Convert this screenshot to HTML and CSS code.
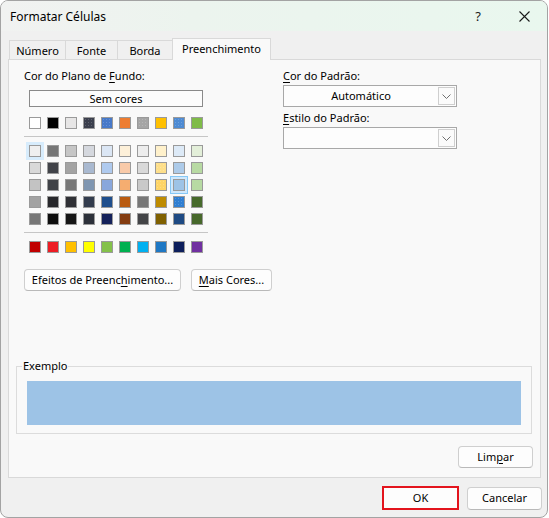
FILE: index.html
```html
<!DOCTYPE html>
<html lang="pt">
<head>
<meta charset="utf-8">
<title>Formatar Células</title>
<link rel="stylesheet" href="styles.css">
</head>
<body>
<div class="window">
  <div class="titlebar">
    <span class="title">Formatar Células</span>
    <span class="capbtn help">?</span>
    <span class="capbtn close"><svg width="11" height="11" viewBox="0 0 11 11"><path d="M0.5 0.5L10.5 10.5M10.5 0.5L0.5 10.5" stroke="#1a1a1a" stroke-width="1.1" fill="none"/></svg></span>
  </div>
  <div class="tabs">
    <div class="tab t1">Número</div>
    <div class="tab t2">Fonte</div>
    <div class="tab t3">Borda</div>
    <div class="tab t4 active">Preenchimento</div>
  </div>
  <div class="panel">
    <div class="top">
      <div class="leftcol">
        <div class="label">Cor do Plano de <u>F</u>undo:</div>
        <div class="nocolor">Sem cores</div>
        <div class="swatches first">
          <span class="sw" style="background:#ffffff"></span>
          <span class="sw" style="background:#000000"></span>
          <span class="sw" style="background:#e7e6e6"></span>
          <span class="sw pat" style="background-color:#3b3f4d"></span>
          <span class="sw pat" style="background-color:#4779c9"></span>
          <span class="sw" style="background:#ed7d31"></span>
          <span class="sw pat" style="background-color:#a5a5a5"></span>
          <span class="sw" style="background:#ffc000"></span>
          <span class="sw pat" style="background-color:#4e8bd3"></span>
          <span class="sw" style="background:#7fbb48"></span>
        </div>
        <div class="sep"></div>
        <div class="swatches tints">
          <span class="sw sel-a" style="background:#efefef"></span>
          <span class="sw" style="background:#767676"></span>
          <span class="sw" style="background:#c6c6c6"></span>
          <span class="sw" style="background:#d5d8de"></span>
          <span class="sw" style="background:#dbe6f4"></span>
          <span class="sw" style="background:#fdf0d9"></span>
          <span class="sw" style="background:#ededed"></span>
          <span class="sw" style="background:#fff1cb"></span>
          <span class="sw" style="background:#ddeaf7"></span>
          <span class="sw" style="background:#e3efd9"></span>

          <span class="sw" style="background:#d9d9d9"></span>
          <span class="sw" style="background:#414349"></span>
          <span class="sw" style="background:#a3a3a3"></span>
          <span class="sw" style="background:#a9b9d0"></span>
          <span class="sw" style="background:#afcaee"></span>
          <span class="sw" style="background:#f8caa9"></span>
          <span class="sw" style="background:#d9d9d9"></span>
          <span class="sw pat" style="background-color:#fedf8a"></span>
          <span class="sw" style="background:#adcbe9"></span>
          <span class="sw" style="background:#b8daa3"></span>

          <span class="sw" style="background:#c3c3c3"></span>
          <span class="sw" style="background:#404247"></span>
          <span class="sw" style="background:#777777"></span>
          <span class="sw" style="background:#7f96b1"></span>
          <span class="sw" style="background:#89a7dc"></span>
          <span class="sw" style="background:#f5ad70"></span>
          <span class="sw" style="background:#c9c9c9"></span>
          <span class="sw pat" style="background-color:#fed465"></span>
          <span class="sw sel-b" style="background:#9dc3e6"></span>
          <span class="sw" style="background:#b7daa3"></span>

          <span class="sw" style="background:#a2a2a2"></span>
          <span class="sw" style="background:#28282b"></span>
          <span class="sw" style="background:#2f3035"></span>
          <span class="sw" style="background:#333c4d"></span>
          <span class="sw" style="background:#1f4e8c"></span>
          <span class="sw" style="background:#b95a0f"></span>
          <span class="sw" style="background:#777777"></span>
          <span class="sw" style="background:#be8b00"></span>
          <span class="sw pat" style="background-color:#2f7ed1"></span>
          <span class="sw" style="background:#476a2c"></span>

          <span class="sw" style="background:#777777"></span>
          <span class="sw" style="background:#0e0e0e"></span>
          <span class="sw" style="background:#151515"></span>
          <span class="sw" style="background:#2c3039"></span>
          <span class="sw" style="background:#14215a"></span>
          <span class="sw" style="background:#843c10"></span>
          <span class="sw" style="background:#434447"></span>
          <span class="sw" style="background:#7f6000"></span>
          <span class="sw" style="background:#1e4a83"></span>
          <span class="sw" style="background:#47682b"></span>
        </div>
        <div class="sep"></div>
        <div class="swatches">
          <span class="sw" style="background:#c00000"></span>
          <span class="sw" style="background:#ed1c24"></span>
          <span class="sw" style="background:#ffc000"></span>
          <span class="sw" style="background:#ffff00"></span>
          <span class="sw" style="background:#84c14a"></span>
          <span class="sw" style="background:#00b050"></span>
          <span class="sw" style="background:#00b0f0"></span>
          <span class="sw" style="background:#1f78c4"></span>
          <span class="sw" style="background:#0d1f5c"></span>
          <span class="sw" style="background:#7030a0"></span>
        </div>
      </div>
      <div class="rightcol">
        <div class="label"><u>C</u>or do Padrão:</div>
        <div class="combo">
          <span class="combo-text">Automático</span>
          <span class="combo-btn"><svg width="9" height="5" viewBox="0 0 9 5"><path d="M0.5 0.5L4.5 4.5L8.5 0.5" stroke="#707070" stroke-width="1" fill="none"/></svg></span>
        </div>
        <div class="label second"><u>E</u>stilo do Padrão:</div>
        <div class="combo">
          <span class="combo-text"></span>
          <span class="combo-btn"><svg width="9" height="5" viewBox="0 0 9 5"><path d="M0.5 0.5L4.5 4.5L8.5 0.5" stroke="#707070" stroke-width="1" fill="none"/></svg></span>
        </div>
      </div>
    </div>
    <div class="actions">
      <div class="btn effects">Efeitos de Preenc<u>h</u>imento...</div>
      <div class="btn more"><u>M</u>ais Cores...</div>
    </div>
    <div class="sample">
      <div class="sample-label">Exemplo</div>
      <div class="preview"></div>
    </div>
    <div class="clear-row">
      <div class="btn limpar">Lim<u>p</u>ar</div>
    </div>
  </div>
  <div class="footer">
    <div class="btn ok">OK</div>
    <div class="btn cancel">Cancelar</div>
  </div>
</div>
</body>
</html>
```
FILE: styles.css
```css
* { box-sizing: border-box; }

body {
  margin: 0;
  background: #ffffff;
  font-family: "Noto Sans", "Open Sans", sans-serif;
  font-size: 11px;
  color: #000000;
}

u { text-decoration: underline; text-underline-offset: 2px; text-decoration-thickness: 1px; }

.window {
  width: 548px;
  height: 518px;
  background: #f0f0f0;
  border: 1px solid #a3a3a3;
  border-radius: 8px;
  overflow: hidden;
}

.titlebar {
  height: 30px;
  display: flex;
  align-items: center;
  background: linear-gradient(90deg, #f1f2f1 0%, #ecf4ee 35%, #e9f7ee 100%);
}

.title {
  flex: 1;
  padding-left: 9px;
  font-size: 12px;
  line-height: 16px;
  padding-top: 1px;
}

.capbtn {
  width: 46px;
  height: 30px;
  display: flex;
  align-items: center;
  justify-content: center;
}

.help { font-size: 13px; color: #1a1a1a; }

.tabs {
  display: flex;
  align-items: flex-end;
  margin-top: 7px;
  margin-left: 8px;
  height: 21px;
}

.tab {
  height: 19px;
  border: 1px solid #d9d9d9;
  border-bottom: none;
  text-align: center;
  line-height: 15px;
  padding-top: 2px;
  background: #f0f0f0;
}

.t1 { width: 57px; }
.t2 { width: 53px; margin-left: -1px; }
.t3 { width: 56px; margin-left: -1px; }
.t4 { width: 99px; margin-left: -1px; }

.tab.active {
  height: 22px;
  margin-bottom: -1px;
  background: #f9f9f9;
  position: relative;
  z-index: 1;
  padding-top: 2px;
}

.panel {
  margin-left: 7px;
  width: 533px;
  height: 419px;
  background: #f9f9f9;
  border: 1px solid #d9d9d9;
}

.top {
  display: flex;
}

.leftcol {
  width: 199px;
  padding-left: 15px;
  padding-top: 8px;
}

.label {
  line-height: 16px;
  white-space: nowrap;
}

.nocolor {
  margin-top: 6px;
  margin-left: 5px;
  width: 174px;
  height: 17px;
  border: 1px solid #8a8a8a;
  background: #fcfcfc;
  text-align: center;
  line-height: 15px;
}

.swatches {
  display: grid;
  grid-template-columns: repeat(10, 12px);
  column-gap: 6px;
  row-gap: 5px;
  margin-left: 5px;
  margin-top: 8px;
}

.swatches.first { margin-top: 10px; }

.sw {
  width: 12px;
  height: 12px;
  border: 1px solid #9a9a9a;
  display: block;
}

.pat {
  background-image: radial-gradient(rgba(255,255,255,0.18) 0.6px, transparent 0.9px);
  background-size: 3px 3px;
}

.sel-a { box-shadow: 0 0 0 3px #d7ecfc; }
.sel-b { box-shadow: 0 0 0 2px #cfe8fc, 0 0 0 3px #86c8f5; }

.sep {
  margin-top: 7px;
  width: 184px;
  height: 1px;
  background: #c6c6c6;
}

.rightcol {
  margin-left: 75px;
  width: 174px;
  padding-top: 8px;
}

.combo {
  margin-top: 1px;
  height: 22px;
  border: 1px solid #a8a8a8;
  background: #fdfdfd;
  display: flex;
}

.combo-text {
  flex: 1;
  text-align: center;
  line-height: 20px;
}

.combo-btn {
  width: 17px;
  margin: 1px 1px 1px 0;
  border: 1px solid #cfcfcf;
  display: flex;
  align-items: center;
  justify-content: center;
  background: #fbfbfb;
}

.label.second { margin-top: 3px; }

.actions {
  display: flex;
  margin-top: 16px;
  padding-left: 15px;
  gap: 10px;
}

.btn {
  height: 22px;
  border: 1px solid #cfcfcf;
  border-bottom-color: #b9b9b9;
  border-radius: 4px;
  background: #fdfdfd;
  text-align: center;
  line-height: 19px;
  white-space: nowrap;
}

.effects { width: 157px; }
.more { width: 81px; }

.sample {
  margin-top: 75px;
  margin-left: 7px;
  width: 516px;
  height: 68px;
  border: 1px solid #dcdcdc;
  padding-left: 10px;
}

.sample-label {
  margin-top: -9px;
  margin-left: -5px;
  width: fit-content;
  padding: 0 1px;
  line-height: 16px;
  background: #f9f9f9;
}

.preview {
  margin-top: 7px;
  width: 494px;
  height: 44px;
  background: #9dc3e6;
}

.clear-row {
  display: flex;
  justify-content: flex-end;
  margin-top: 12px;
  padding-right: 7px;
}

.limpar { width: 75px; }

.footer {
  display: flex;
  justify-content: flex-end;
  align-items: center;
  gap: 8px;
  margin-top: 8px;
  padding-right: 5px;
}

.ok {
  width: 77px;
  height: 24px;
  border: 2px solid #e3141d;
  border-radius: 0;
  line-height: 20px;
}

.cancel {
  width: 75px;
  height: 23px;
}
```
